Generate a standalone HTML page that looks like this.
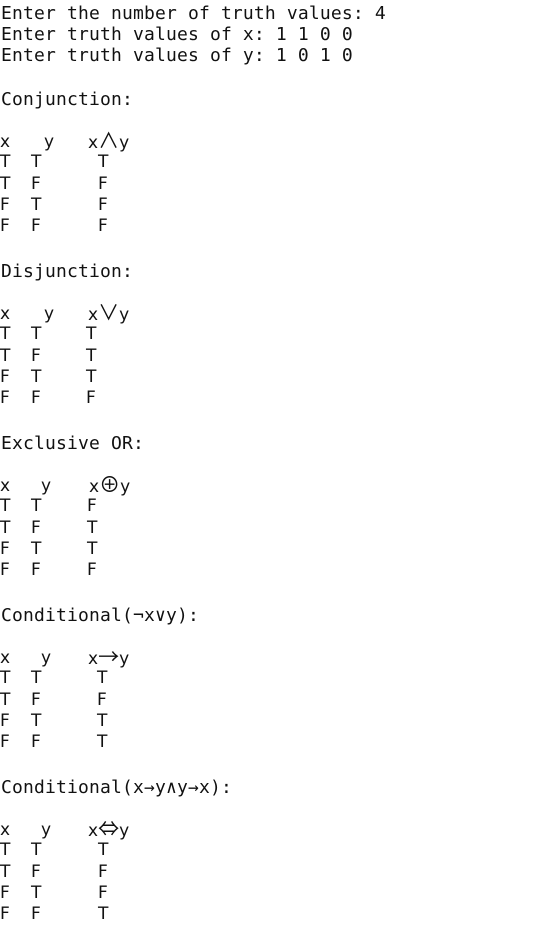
<!DOCTYPE html>
<html><head><meta charset="utf-8"><style>
body{margin:0;width:537px;height:930px;background:#fff;position:relative;overflow:hidden;color:#111}
.m{position:absolute;left:1px;font-family:"DejaVu Sans Mono","Liberation Mono",monospace;font-size:18px;letter-spacing:0.16px;line-height:20px;white-space:pre;top:1px}
.s{position:absolute;font-family:"DejaVu Sans","Liberation Sans",sans-serif;font-size:17px;line-height:20px;white-space:pre}
.g{font-size:21px;font-family:"Noto Sans CJK SC","DejaVu Sans",sans-serif;line-height:16px}
</style></head><body>
<div class="m" style="top:4px">Enter the number of truth values: 4</div>
<div class="m" style="top:25px">Enter truth values of x: 1 1 0 0</div>
<div class="m" style="top:46px">Enter truth values of y: 1 0 1 0</div>

<div class="m" style="top:90px">Conjunction:</div>
<div class="s" style="top:132px;left:0">x</div><div class="s" style="top:132px;left:44px">y</div><div class="s" style="top:132px;left:88px">x<span class="g">∧</span>y</div>
<div class="s" style="top:152px;left:0">T</div><div class="s" style="top:152px;left:31px">T</div><div class="s" style="top:152px;left:98px">T</div>
<div class="s" style="top:174px;left:0">T</div><div class="s" style="top:174px;left:31px">F</div><div class="s" style="top:174px;left:98px">F</div>
<div class="s" style="top:195px;left:0">F</div><div class="s" style="top:195px;left:31px">T</div><div class="s" style="top:195px;left:98px">F</div>
<div class="s" style="top:216px;left:0">F</div><div class="s" style="top:216px;left:31px">F</div><div class="s" style="top:216px;left:98px">F</div>

<div class="m" style="top:262px">Disjunction:</div>
<div class="s" style="top:304px;left:0">x</div><div class="s" style="top:304px;left:44px">y</div><div class="s" style="top:304px;left:88px">x<span class="g">∨</span>y</div>
<div class="s" style="top:324px;left:0">T</div><div class="s" style="top:324px;left:31px">T</div><div class="s" style="top:324px;left:86px">T</div>
<div class="s" style="top:346px;left:0">T</div><div class="s" style="top:346px;left:31px">F</div><div class="s" style="top:346px;left:86px">T</div>
<div class="s" style="top:367px;left:0">F</div><div class="s" style="top:367px;left:31px">T</div><div class="s" style="top:367px;left:86px">T</div>
<div class="s" style="top:388px;left:0">F</div><div class="s" style="top:388px;left:31px">F</div><div class="s" style="top:388px;left:86px">F</div>

<div class="m" style="top:434px">Exclusive OR:</div>
<div class="s" style="top:476px;left:0">x</div><div class="s" style="top:476px;left:41px">y</div><div class="s" style="top:476px;left:89px">x<span class="g">⊕</span>y</div>
<div class="s" style="top:496px;left:0">T</div><div class="s" style="top:496px;left:31px">T</div><div class="s" style="top:496px;left:87px">F</div>
<div class="s" style="top:518px;left:0">T</div><div class="s" style="top:518px;left:31px">F</div><div class="s" style="top:518px;left:87px">T</div>
<div class="s" style="top:539px;left:0">F</div><div class="s" style="top:539px;left:31px">T</div><div class="s" style="top:539px;left:87px">T</div>
<div class="s" style="top:560px;left:0">F</div><div class="s" style="top:560px;left:31px">F</div><div class="s" style="top:560px;left:87px">F</div>

<div class="m" style="top:606px">Conditional(¬x∨y):</div>
<div class="s" style="top:648px;left:0">x</div><div class="s" style="top:648px;left:41px">y</div><div class="s" style="top:648px;left:88px">x<span class="g">→</span>y</div>
<div class="s" style="top:668px;left:0">T</div><div class="s" style="top:668px;left:31px">T</div><div class="s" style="top:668px;left:97px">T</div>
<div class="s" style="top:690px;left:0">T</div><div class="s" style="top:690px;left:31px">F</div><div class="s" style="top:690px;left:97px">F</div>
<div class="s" style="top:711px;left:0">F</div><div class="s" style="top:711px;left:31px">T</div><div class="s" style="top:711px;left:97px">T</div>
<div class="s" style="top:732px;left:0">F</div><div class="s" style="top:732px;left:31px">F</div><div class="s" style="top:732px;left:97px">T</div>

<div class="m" style="top:778px">Conditional(x→y∧y→x):</div>
<div class="s" style="top:820px;left:0">x</div><div class="s" style="top:820px;left:41px">y</div><div class="s" style="top:820px;left:88px">x<span class="g">⇔</span>y</div>
<div class="s" style="top:840px;left:0">T</div><div class="s" style="top:840px;left:31px">T</div><div class="s" style="top:840px;left:98px">T</div>
<div class="s" style="top:862px;left:0">T</div><div class="s" style="top:862px;left:31px">F</div><div class="s" style="top:862px;left:98px">F</div>
<div class="s" style="top:883px;left:0">F</div><div class="s" style="top:883px;left:31px">T</div><div class="s" style="top:883px;left:98px">F</div>
<div class="s" style="top:904px;left:0">F</div><div class="s" style="top:904px;left:31px">F</div><div class="s" style="top:904px;left:98px">T</div>
</body></html>
